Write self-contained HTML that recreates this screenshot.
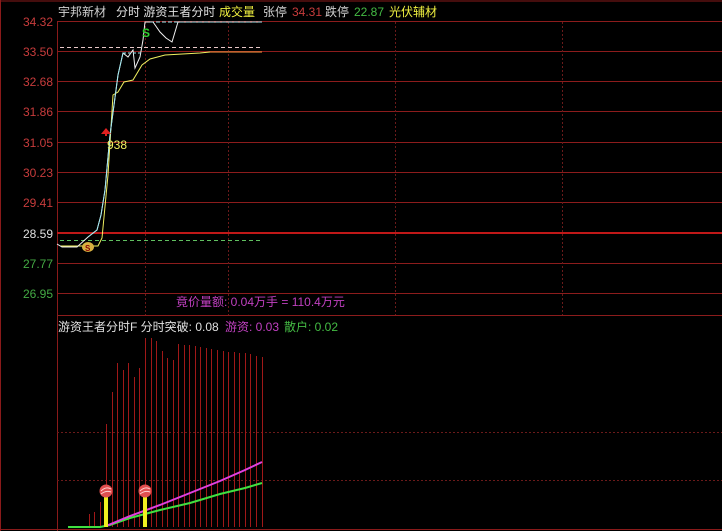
<!DOCTYPE html>
<html><head><meta charset="utf-8"><style>
html,body{margin:0;padding:0;background:#000;width:722px;height:531px;overflow:hidden}
svg{display:block}
text{font-family:"Liberation Sans","Noto Sans CJK SC",sans-serif;font-size:12px}
</style></head><body>
<svg width="722" height="531" viewBox="0 0 722 531" xmlns="http://www.w3.org/2000/svg">
<rect width="722" height="531" fill="#000"/>
<!-- frame -->
<line x1="0" y1="1" x2="722" y2="1" stroke="#8a1a1a"/>
<line x1="0.5" y1="0" x2="0.5" y2="531" stroke="#8a1a1a"/>
<line x1="57.5" y1="21" x2="57.5" y2="531" stroke="#8a1a1a"/>
<line x1="0" y1="529.5" x2="722" y2="529.5" stroke="#8a1a1a"/>
<!-- horizontal grid upper -->
<g stroke="#8c1c1c" stroke-width="1">
<line x1="57" y1="21.5" x2="722" y2="21.5"/>
<line x1="57" y1="51.5" x2="722" y2="51.5"/>
<line x1="57" y1="81.5" x2="722" y2="81.5"/>
<line x1="57" y1="111.5" x2="722" y2="111.5"/>
<line x1="57" y1="142.5" x2="722" y2="142.5"/>
<line x1="57" y1="172.5" x2="722" y2="172.5"/>
<line x1="57" y1="202.5" x2="722" y2="202.5"/>
<line x1="57" y1="263.5" x2="722" y2="263.5"/>
<line x1="57" y1="293.5" x2="722" y2="293.5"/>
<line x1="57" y1="315.5" x2="722" y2="315.5"/>
</g>
<line x1="57" y1="233" x2="722" y2="233" stroke="#c01818" stroke-width="2"/>
<!-- vertical dashed -->
<g stroke="#6a1a1a" stroke-dasharray="2,2">
<line x1="145.5" y1="22" x2="145.5" y2="315"/>
<line x1="228.5" y1="22" x2="228.5" y2="315"/>
<line x1="395.5" y1="22" x2="395.5" y2="315"/>
<line x1="562.5" y1="22" x2="562.5" y2="315"/>
<line x1="57" y1="432.5" x2="722" y2="432.5"/>
<line x1="57" y1="480.5" x2="722" y2="480.5"/>
</g>
<!-- axis labels -->
<g text-anchor="end">
<text x="53" y="26" fill="#c83c3c">34.32</text>
<text x="53" y="56" fill="#c83c3c">33.50</text>
<text x="53" y="86" fill="#c83c3c">32.68</text>
<text x="53" y="116" fill="#c83c3c">31.86</text>
<text x="53" y="147" fill="#c83c3c">31.05</text>
<text x="53" y="177" fill="#c83c3c">30.23</text>
<text x="53" y="207" fill="#c83c3c">29.41</text>
<text x="53" y="238" fill="#e0e0e0">28.59</text>
<text x="53" y="268" fill="#44aa44">27.77</text>
<text x="53" y="298" fill="#44aa44">26.95</text>
</g>
<!-- title -->
<text x="58" y="16" fill="#d0d0d0">宇邦新材</text>
<text x="116" y="16" fill="#e0e0e0">分时 游资王者分时</text>
<text x="219" y="16" fill="#f0f040">成交量</text>
<text x="263" y="16" fill="#d0d0d0">张停</text>
<text x="292" y="16" fill="#c83c3c">34.31</text>
<text x="325" y="16" fill="#d0d0d0">跌停</text>
<text x="354" y="16" fill="#44bb44">22.87</text>
<text x="389" y="16" fill="#f0f040">光伏辅材</text>
<!-- dashed refs -->
<line x1="60" y1="47.5" x2="262" y2="47.5" stroke="#e8c8c8" stroke-dasharray="4,3"/>
<line x1="60" y1="240.5" x2="262" y2="240.5" stroke="#60c060" stroke-dasharray="4,3"/>
<!-- avg line -->
<polyline fill="none" stroke="#f0f060" stroke-width="1" points="60,246 98,246 102,238 108,175 113,95 118,92 124,82 133,80 142,65 150,59 165,55 200,53 210,52"/>
<line x1="210" y1="52" x2="262" y2="52" stroke="#ff9a40"/>
<!-- price line -->
<polyline fill="none" stroke="#f0f0f0" stroke-width="1" points="57,244 62,247 77,247 88,237 97,230 101,215 105,190 110,135 118,75 123,53 128,57 133,50 135,68 140,57 143,40 145,22 153,22 160,32 166,38 172,42 178,22 262,22"/>
<polyline fill="none" stroke="#a0e8f0" stroke-width="1" points="88,237 97,230 101,215 105,190 110,135 118,75 123,53"/>
<line x1="123" y1="53" x2="143" y2="53" stroke="#a0e8f0" stroke-dasharray="3,2"/>
<line x1="150" y1="22" x2="262" y2="22" stroke="#a0e8f0" stroke-dasharray="4,2"/>
<!-- markers -->
<path d="M101,134 L106,128 L111,134 Z" fill="#e02020"/>
<rect x="105" y="132" width="2" height="4" fill="#e02020"/>
<text x="107" y="149" fill="#f0f060">938</text>
<text x="142" y="37" fill="#30d030" font-weight="bold">S</text>
<ellipse cx="88" cy="247" rx="6" ry="5" fill="#d8b040"/>
<text x="85" y="251" fill="#800" style="font-size:8px;font-weight:bold">S</text>
<!-- auction text -->
<text x="176" y="306" fill="#c040c0">竟价量额: 0.04万手 = 110.4万元</text>
<!-- lower title -->
<text x="58" y="331" fill="#e0e0e0">游资王者分时F 分时突破: 0.08</text>
<text x="225" y="331" fill="#c040c0">游资: 0.03</text>
<text x="284" y="331" fill="#44bb44">散户: 0.02</text>
<!-- bars -->
<g stroke="#a01818" stroke-width="1">
<line x1="89.5" y1="527" x2="89.5" y2="514"/><line x1="94.5" y1="527" x2="94.5" y2="512"/>
<line x1="100.5" y1="527" x2="100.5" y2="502"/><line x1="106.5" y1="527" x2="106.5" y2="424"/>
<line x1="112.5" y1="527" x2="112.5" y2="392"/><line x1="117.5" y1="527" x2="117.5" y2="363"/>
<line x1="123.5" y1="527" x2="123.5" y2="370"/><line x1="128.5" y1="527" x2="128.5" y2="363"/>
<line x1="134.5" y1="527" x2="134.5" y2="377"/><line x1="139.5" y1="527" x2="139.5" y2="368"/>
<line x1="145.5" y1="527" x2="145.5" y2="338"/><line x1="151.5" y1="527" x2="151.5" y2="338"/>
<line x1="156.5" y1="527" x2="156.5" y2="341"/><line x1="162.5" y1="527" x2="162.5" y2="351"/>
<line x1="167.5" y1="527" x2="167.5" y2="358"/><line x1="173.5" y1="527" x2="173.5" y2="360"/>
<line x1="178.5" y1="527" x2="178.5" y2="344"/><line x1="184.5" y1="527" x2="184.5" y2="345"/>
<line x1="189.5" y1="527" x2="189.5" y2="345"/><line x1="195.5" y1="527" x2="195.5" y2="346"/>
<line x1="200.5" y1="527" x2="200.5" y2="347"/><line x1="206.5" y1="527" x2="206.5" y2="348"/>
<line x1="211.5" y1="527" x2="211.5" y2="349"/><line x1="217.5" y1="527" x2="217.5" y2="350"/>
<line x1="223.5" y1="527" x2="223.5" y2="351"/><line x1="228.5" y1="527" x2="228.5" y2="352"/>
<line x1="234.5" y1="527" x2="234.5" y2="352"/><line x1="239.5" y1="527" x2="239.5" y2="353"/>
<line x1="245.5" y1="527" x2="245.5" y2="353"/><line x1="250.5" y1="527" x2="250.5" y2="354"/>
<line x1="256.5" y1="527" x2="256.5" y2="356"/><line x1="262.5" y1="527" x2="262.5" y2="357"/>
</g>
<polyline fill="none" stroke="#40e040" stroke-width="2" points="68,527 100,527 110,525 130,518 160,510 190,503 220,494 245,488 262,483"/>
<polyline fill="none" stroke="#e040e0" stroke-width="2" points="106,526 130,516 160,505 190,493 220,481 245,470 262,462"/>
<rect x="104" y="496" width="4" height="31" fill="#f0f020"/>
<rect x="143" y="496" width="4" height="31" fill="#f0f020"/>
<circle cx="106" cy="491" r="6.5" fill="#e05050"/>
<circle cx="145" cy="491" r="6.5" fill="#e05050"/>
<path d="M101,491 Q106,486 111,489 M101,494 Q106,490 111,492" stroke="#ffd0d0" fill="none"/>
<path d="M140,491 Q145,486 150,489 M140,494 Q145,490 150,492" stroke="#ffd0d0" fill="none"/>
</svg>
</body></html>
